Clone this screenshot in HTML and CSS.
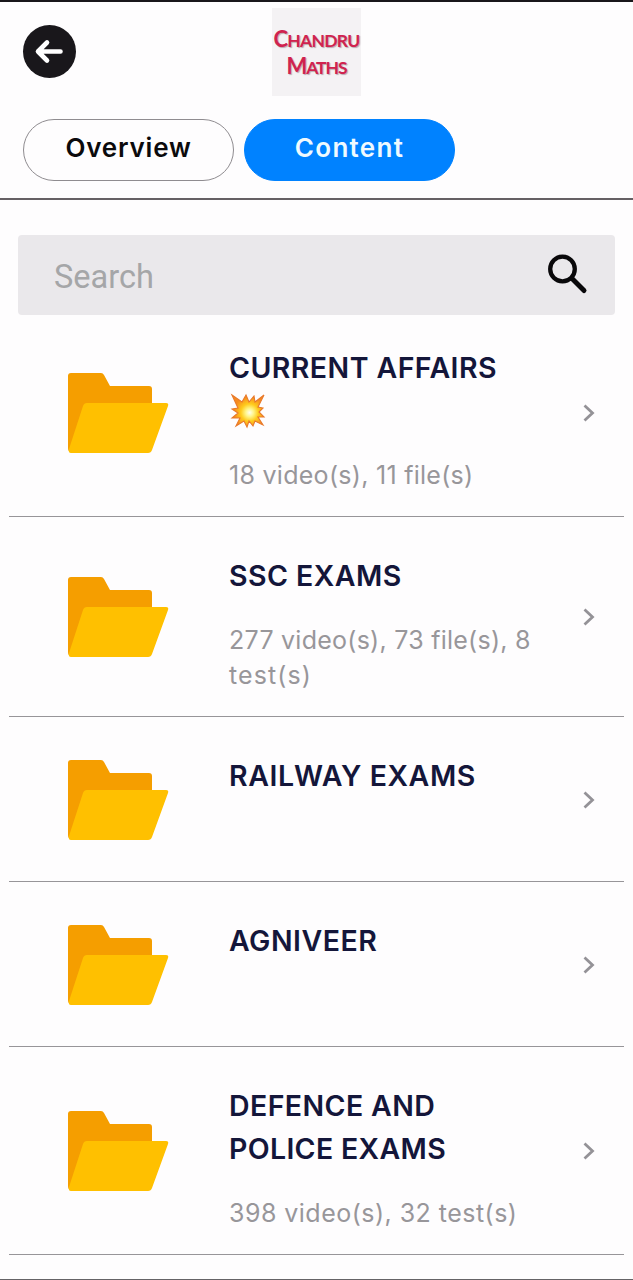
FILE: index.html
```html
<!DOCTYPE html>
<html lang="en">
<head>
  <meta charset="UTF-8">
  <title>Chandru Maths</title>
  <link rel="stylesheet" href="styles.css">
</head>
<body>
  <svg width="0" height="0" class="defs">
    <symbol id="folder" viewBox="0 0 102 82">
      <path fill="#f59e00" d="M4 1H34Q36 1 37 3L43 14H82Q85 14 85 17V40L4 80Q1 80 1 76V4Q1 1 4 1Z"/>
      <path fill="#ffc000" d="M20 31H99Q102 31 101 34L85 78Q84 81 81 81H4Q1 81 2 77L16 34Q17 31 20 31Z"/>
    </symbol>
    <symbol id="chevron" viewBox="0 0 12 18">
      <path fill="none" stroke="#949297" stroke-width="2.8" d="M1.5 1.5L9.5 9L1.5 16.5"/>
    </symbol>
  </svg>

  <header class="header">
    <div class="topbar">
      <button class="back" aria-label="Back">
        <svg width="54" height="54" viewBox="0 0 54 54">
          <circle cx="27.5" cy="27.5" r="26.5" fill="#19171b"/>
          <path d="M38.500 27.500H16M25 18.500L16 27.500L25 36.500" fill="none" stroke="#fff" stroke-width="4.600" stroke-linecap="round" stroke-linejoin="round"/>
        </svg>
      </button>
      <div class="logo">
        <span class="logo-top">Chandru</span>
        <span class="logo-bottom">Maths</span>
      </div>
    </div>
    <nav class="tabs">
      <button class="tab"><span class="t-overview">Overview</span></button>
      <button class="tab active"><span class="t-content">Content</span></button>
    </nav>
  </header>

  <div class="search">
    <span class="placeholder">Search</span>
    <svg width="42" height="42" viewBox="0 0 42 42" fill="none" stroke="#09080a">
      <circle cx="15.500" cy="16" r="12.300" stroke-width="4.300"/>
      <path d="M25 25.500L37 37.500" stroke-width="5" stroke-linecap="round"/>
    </svg>
  </div>

  <main class="list">
    <div class="row">
      <svg class="folder"><use href="#folder"/></svg>
      <div class="info">
        <h2><span class="t-current">CURRENT AFFAIRS</span><br>
          <svg class="boom" width="37" height="39" viewBox="0 0 37 39">
            <defs>
              <radialGradient id="glow" cx=".55" cy=".55" r=".5">
                <stop offset="0" stop-color="#fffff0"/>
                <stop offset=".25" stop-color="#fff58a"/>
                <stop offset=".55" stop-color="#ffcb1c"/>
                <stop offset="1" stop-color="#f68a1e"/>
              </radialGradient>
            </defs>
            <path d="M3 2L13 9L17 2L20 9L25 3L26 9L35 2L29 14L34 15L30 19L35 24L29 24L34 32L26 28L24 33L20 28L18 34L15 28L7 33L11 25L3 25L9 20L3 16L9 15Z" fill="url(#glow)" stroke="#e8792b" stroke-width="1.100"/>
          </svg>
        </h2>
        <p><span class="t-s1">18 video(s), 11 file(s)</span></p>
      </div>
      <svg class="chevron"><use href="#chevron"/></svg>
    </div>
    <div class="row">
      <svg class="folder"><use href="#folder"/></svg>
      <div class="info">
        <h2><span class="t-ssc">SSC EXAMS</span></h2>
        <p><span class="t-s2">277 video(s), 73 file(s), 8</span><br><span class="t-s3">test(s)</span></p>
      </div>
      <svg class="chevron"><use href="#chevron"/></svg>
    </div>
    <div class="row">
      <svg class="folder"><use href="#folder"/></svg>
      <div class="info">
        <h2><span class="t-railway">RAILWAY EXAMS</span></h2>
        <p></p>
      </div>
      <svg class="chevron"><use href="#chevron"/></svg>
    </div>
    <div class="row">
      <svg class="folder"><use href="#folder"/></svg>
      <div class="info">
        <h2><span class="t-agniveer">AGNIVEER</span></h2>
        <p></p>
      </div>
      <svg class="chevron"><use href="#chevron"/></svg>
    </div>
    <div class="row">
      <svg class="folder"><use href="#folder"/></svg>
      <div class="info">
        <h2><span class="t-defence">DEFENCE AND</span><br><span class="t-police">POLICE EXAMS</span></h2>
        <p><span class="t-s4">398 video(s), 32 test(s)</span></p>
      </div>
      <svg class="chevron"><use href="#chevron"/></svg>
    </div>
  </main>
</body>
</html>
```
FILE: styles.css
```css
* {
  box-sizing: border-box;
}

body {
  margin: 0;
  height: 1280px;
  overflow: hidden;
  background: #fefdfe;
  border-top: 2px solid #19171b;
  border-bottom: 1px solid #656366;
  font-family: Inter, "Open Sans", sans-serif;
}

.defs {
  display: block;
}

button {
  padding: 0;
  border: none;
  background: none;
  font-family: inherit;
}

.header {
  height: 198px;
  border-bottom: 2px solid #656064;
}

.topbar {
  display: grid;
  grid-template-columns: 250px 89px;
  height: 117px;
  padding: 6px 0 0 22px;
}

.back {
  width: 54px;
  height: 54px;
  margin-top: 16px;
}

.back svg {
  display: block;
}

.logo {
  height: 88px;
  padding-top: 17px;
  background: #f4f2f4;
  color: #d0234f;
  text-align: center;
  text-transform: uppercase;
  font-family: Lato, sans-serif;
  font-weight: 700;
  font-size: 17.5px;
  line-height: 27px;
  text-shadow: 1px 1px 1px #b9a9af;
}

.logo span {
  display: block;
  height: 27px;
  white-space: nowrap;
}

.logo span::first-letter {
  font-size: 22px;
}

.logo-top { letter-spacing: -0.7px; }
.logo-bottom { letter-spacing: -1.1px; }

.tabs {
  display: flex;
  gap: 10px;
  padding-left: 23px;
}

.tab {
  width: 211px;
  height: 62px;
  padding-bottom: 5px;
  border: 1px solid #8f8c90;
  border-radius: 31px;
  color: #0b0a0c;
  font-size: 26px;
  font-weight: 600;
}

.tab.active {
  border-color: #0082ff;
  background: #0082ff;
  color: #effaff;
}

.t-overview { letter-spacing: 0.8px; }
.t-content { letter-spacing: 1.3px; }

.search {
  display: flex;
  align-items: center;
  justify-content: space-between;
  height: 80px;
  margin: 35px 18px 0;
  padding: 0 26px 2px 36px;
  border-radius: 4px;
  background: #eae8eb;
}

.placeholder {
  padding-top: 6px;
  color: #a5a6a8;
  font-family: Roboto, sans-serif;
  font-size: 32.5px;
}

/* first row tucks slightly under the search box */
.list {
  margin: -6px 9px 0;
}

.row {
  display: flex;
  align-items: center;
  border-bottom: 1px solid #979599;
  padding: 37px 29px 23px 58px;
}

.folder {
  width: 102px;
  height: 82px;
  flex: none;
  margin-bottom: 13px;
}

.info {
  flex: 1;
  margin-left: 60px;
  white-space: nowrap;
}

h2 {
  margin: 0 0 26px;
  color: #14163a;
  font-size: 28.5px;
  font-weight: 600;
  line-height: 43px;
}

p {
  min-height: 35px;
  margin: 0;
  color: #98969a;
  font-size: 25px;
  line-height: 35px;
}

.t-current { letter-spacing: 0.43px; }
.t-ssc { letter-spacing: 0.45px; }
.t-railway { letter-spacing: 0.6px; }
.t-agniveer { letter-spacing: 0.5px; }
.t-defence { letter-spacing: 0.4px; }
.t-police { letter-spacing: 0.33px; }
.t-s1 { letter-spacing: 0.28px; }
.t-s2 { letter-spacing: 0.25px; }
.t-s3 { letter-spacing: 1.1px; }
.t-s4 { letter-spacing: 0.47px; }

.boom {
  display: block;
  margin-top: 4px;
}

.chevron {
  width: 12px;
  height: 18px;
  flex: none;
  margin-bottom: 13px;
}
```
